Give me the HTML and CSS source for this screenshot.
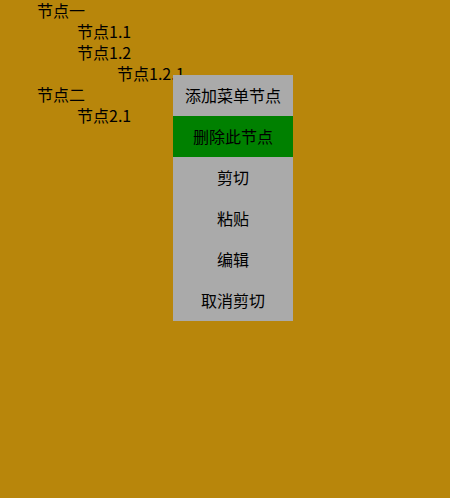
FILE: index.html
```html
<!DOCTYPE html>
<html lang="zh">
<head>
<meta charset="utf-8">
<link rel="stylesheet" href="styles.css">
</head>
<body>
<ul class="tree">
  <li>节点一
    <ul class="sub">
      <li>节点1.1</li>
      <li>节点1.2
        <ul class="sub">
          <li>节点1.2.1</li>
        </ul>
      </li>
    </ul>
  </li>
  <li>节点二
    <ul class="sub">
      <li>节点2.1</li>
    </ul>
  </li>
</ul>
<div class="menu">
  <div class="item">添加菜单节点</div>
  <div class="item active">删除此节点</div>
  <div class="item">剪切</div>
  <div class="item">粘贴</div>
  <div class="item">编辑</div>
  <div class="item">取消剪切</div>
</div>
</body>
</html>
```
FILE: styles.css
```css
html, body {
  margin: 0;
  padding: 0;
  background: #b8860b;
  height: 100%;
}
body {
  font-family: "Noto Sans CJK SC", "Noto Sans", sans-serif;
  font-size: 16px;
  line-height: 21px;
  color: #000;
  position: relative;
}
.tree {
  list-style: none;
  margin: 0;
  padding: 0 0 0 37px;
}
.sub {
  list-style: none;
  margin: 0;
  padding: 0 0 0 40px;
}
.menu {
  position: absolute;
  left: 173px;
  top: 75px;
  width: 120px;
  background: #aaaaaa;
}
.item {
  height: 41px;
  line-height: 41px;
  text-align: center;
}
.item.active {
  background: #008000;
}
```
